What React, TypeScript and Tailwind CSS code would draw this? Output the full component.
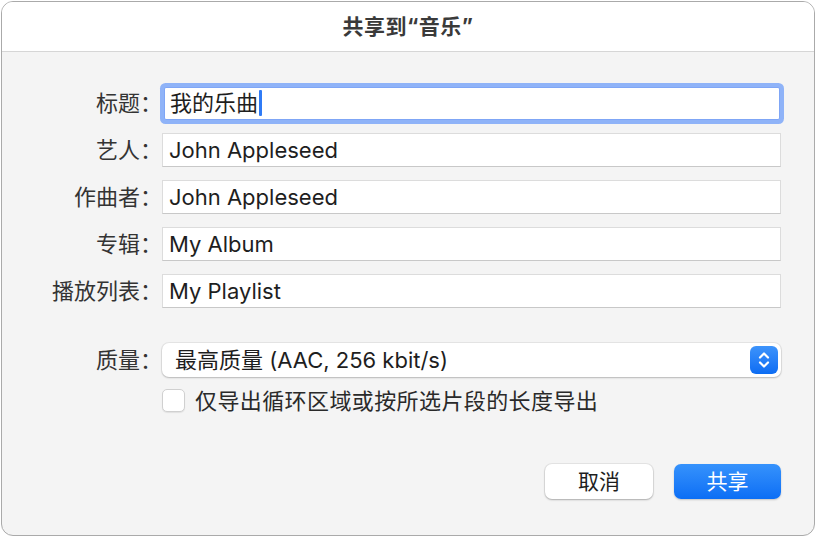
import React from "react";

const font = { fontFamily: 'Inter, "Noto Sans CJK SC", sans-serif' };

function Row({ label, value, focused }: { label: string; value: string; focused?: boolean }) {
  return (
    <div className="flex items-center h-[34px]">
      <div className="w-[160px] text-right text-[22px] text-[#333] leading-none">{label}</div>
      <div
        className={
          focused
            ? "relative ml-[2px] w-[616px] h-[33px] bg-white border border-[#7fa6f6] shadow-[0_0_0_4px_#8fb3f8] rounded-[2px] flex items-center px-[5px]"
            : "ml-[0px] w-[619px] h-[34px] bg-white border border-[#dcdcdc] border-b-[#c8c8c8] flex items-center px-[6px]"
        }
      >
        <span className="text-[22px] text-[#1e1e1e] leading-none">{value}</span>
        {focused && <span className="ml-[1px] w-[3px] h-[26px] bg-[#2f7bf6] rounded-[1px]" />}
      </div>
    </div>
  );
}

export default function App() {
  return (
    <div className="w-[817px] h-[537px] bg-white p-[1px]" style={font}>
      <div className="w-[814px] h-[535px] rounded-[12px] border border-[#aaaaaa] overflow-hidden flex flex-col bg-[#f4f4f4]">
        <div className="h-[50px] bg-white border-b border-[#d6d6d6] flex items-center justify-center shrink-0">
          <span className="text-[21px] font-bold text-[#3a3a3a] tracking-[0.5px]">共享到“音乐”</span>
        </div>
        <div className="flex flex-col pt-[34px]">
          <div className="flex flex-col gap-[13px]">
            <Row label="标题：" value="我的乐曲" focused />
            <Row label="艺人：" value="John Appleseed" />
            <Row label="作曲者：" value="John Appleseed" />
            <Row label="专辑：" value="My Album" />
            <Row label="播放列表：" value="My Playlist" />
          </div>
          <div className="flex items-center h-[34px] mt-[35px]">
            <div className="w-[160px] text-right text-[22px] text-[#333] leading-none">质量：</div>
            <div className="w-[619px] h-[34px] bg-white rounded-[7px] shadow-[0_0_0_1px_rgba(0,0,0,0.06),0_1px_2px_rgba(0,0,0,0.2)] flex items-center pl-[13px] pr-[3px]">
              <span className="flex-1 text-[22px] text-[#1e1e1e] leading-none">最高质量 (AAC, 256 kbit/s)</span>
              <div className="w-[28px] h-[28px] rounded-[6px] bg-gradient-to-b from-[#3c93fb] to-[#0b6cf3] flex items-center justify-center">
                <svg width="14" height="20" viewBox="0 0 14 20" fill="none" stroke="white" strokeWidth="2.2" strokeLinecap="round" strokeLinejoin="round">
                  <path d="M3 7.5 L7 3.5 L11 7.5" />
                  <path d="M3 12.5 L7 16.5 L11 12.5" />
                </svg>
              </div>
            </div>
          </div>
          <div className="flex items-center mt-[12px] ml-[160px]">
            <div className="w-[23px] h-[23px] rounded-[5px] bg-white border border-[#d0d0d0] shadow-[0_1px_1px_rgba(0,0,0,0.08)]" />
            <span className="ml-[10px] text-[22px] text-[#2a2a2a] leading-none tracking-[0.4px]">仅导出循环区域或按所选片段的长度导出</span>
          </div>
          <div className="flex justify-end gap-[21px] mt-[52px] pr-[33px]">
            <button className="w-[108px] h-[35px] rounded-[7px] bg-white shadow-[0_0_0_1px_rgba(0,0,0,0.06),0_1px_2px_rgba(0,0,0,0.25)] text-[21px] text-[#1e1e1e] leading-none">
              取消
            </button>
            <button className="w-[107px] h-[35px] rounded-[7px] bg-gradient-to-b from-[#3592fc] to-[#0b6ef5] shadow-[0_1px_2px_rgba(0,0,0,0.2)] text-[21px] text-white leading-none">
              共享
            </button>
          </div>
        </div>
      </div>
    </div>
  );
}
